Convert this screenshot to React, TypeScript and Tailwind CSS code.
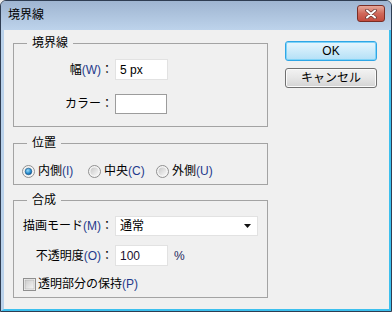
import React from 'react'

const font = "font-['Liberation_Sans','Noto_Sans_CJK_JP',sans-serif]"

function Key({ k }: { k: string }) {
  return <span className="text-[#1f3a8c]">({k})</span>
}

function Radio({ checked }: { checked?: boolean }) {
  return (
    <svg width="13" height="13" viewBox="0 0 13 13" className="shrink-0">
      <defs>
        <linearGradient id="rg-off" x1="0" y1="0" x2="1" y2="1">
          <stop offset="0" stopColor="#c8c8c8" />
          <stop offset="1" stopColor="#f8f8f8" />
        </linearGradient>
        <radialGradient id="rg-on" cx="0.4" cy="0.35" r="0.7">
          <stop offset="0" stopColor="#9fdcf8" />
          <stop offset="0.6" stopColor="#2a8fd0" />
          <stop offset="1" stopColor="#0d4f8c" />
        </radialGradient>
      </defs>
      <circle cx="6.5" cy="6.5" r="6" fill="#f4f4f4" stroke="#8f8f8f" />
      <circle cx="6.5" cy="6.5" r="4" fill="url(#rg-off)" />
      {checked && <circle cx="6.5" cy="6.5" r="3.3" fill="url(#rg-on)" stroke="#1a5a8e" strokeWidth="0.6" />}
    </svg>
  )
}

function Checkbox() {
  return (
    <svg width="13" height="13" viewBox="0 0 13 13" className="shrink-0">
      <defs>
        <linearGradient id="cb" x1="0" y1="0" x2="1" y2="1">
          <stop offset="0" stopColor="#cbcbcb" />
          <stop offset="1" stopColor="#f7f7f7" />
        </linearGradient>
      </defs>
      <rect x="0.5" y="0.5" width="12" height="12" fill="#f4f4f4" stroke="#8f8f8f" />
      <rect x="2" y="2" width="9" height="9" fill="url(#cb)" stroke="#a8a8a8" strokeWidth="0.5" />
    </svg>
  )
}

function Legend({ children }: { children: React.ReactNode }) {
  return <legend className="ml-[13px] px-[5px] text-[12px] leading-[14px]">{children}</legend>
}

function FieldLabel({ children }: { children: React.ReactNode }) {
  return <span className="w-[99px] text-right text-[12px] leading-[14px] whitespace-nowrap">{children}</span>
}

export default function App() {
  return (
    <div className={`w-[392px] h-[312px] bg-[#eaeaea] text-black ${font}`}>
      <div className="w-[392px] h-[312px] flex flex-col rounded-t-[6px] border border-[#2f3d52] overflow-hidden bg-[#b9d1ea]">
        {/* title bar */}
        <div className="h-[29px] shrink-0 flex items-center justify-between pl-[7px] pr-[6px] bg-gradient-to-b from-[#9fb5d1] to-[#bdd3eb]">
          <span className="text-[12px] leading-[14px] -mt-[2px]">境界線</span>
          <div className="w-[28px] h-[17px] -mt-[4px] rounded-[3px] border border-[#7a2d25] bg-gradient-to-b from-[#e6a89a] via-[#d0685a] to-[#c24b3e] flex items-center justify-center">
            <svg width="14" height="10" viewBox="0 0 14 10">
              <path d="M3 1.5 L11 8.5 M11 1.5 L3 8.5" stroke="#6b3a36" strokeWidth="3.6" strokeLinecap="round" />
              <path d="M3 1.5 L11 8.5 M11 1.5 L3 8.5" stroke="#ffffff" strokeWidth="2" strokeLinecap="round" />
            </svg>
          </div>
        </div>

        {/* client */}
        <div className="flex-1 flex border-l-[3px] border-l-[#b9d1ea] border-r-2 border-r-[#3cc0ee] border-b-2 border-b-[#3cc0ee]">
          <div className="flex-1 flex bg-[#f0f0f0] pl-[9px] pt-[6px]">
            <div className="w-[255px] flex flex-col">
              {/* 境界線 */}
              <fieldset className="h-[91px] border border-[#a3a3a3]">
                <Legend>境界線</Legend>
                <div className="flex flex-col pt-[9px] gap-[14px]">
                  <div className="flex items-center gap-[2px]">
                    <FieldLabel>
                      幅<Key k="W" />：
                    </FieldLabel>
                    <div className="w-[53px] h-[21px] bg-white border border-[#e2e2e2] flex items-center pl-[4px] text-[12px]">
                      5 px
                    </div>
                  </div>
                  <div className="flex items-center gap-[2px]">
                    <FieldLabel>カラー：</FieldLabel>
                    <div className="w-[52px] h-[20px] bg-white border border-[#9c9c9c]" />
                  </div>
                </div>
              </fieldset>

              {/* 位置 */}
              <fieldset className="mt-[9px] h-[49px] border border-[#a3a3a3]">
                <Legend>位置</Legend>
                <div className="flex items-center pl-[8px] pt-[14px] text-[12px] leading-[14px]">
                  <div className="w-[66px] flex items-center gap-[3px]">
                    <Radio checked />
                    <span>
                      内側<Key k="I" />
                    </span>
                  </div>
                  <div className="w-[68px] flex items-center gap-[3px]">
                    <Radio />
                    <span>
                      中央<Key k="C" />
                    </span>
                  </div>
                  <div className="flex items-center gap-[3px]">
                    <Radio />
                    <span>
                      外側<Key k="U" />
                    </span>
                  </div>
                </div>
              </fieldset>

              {/* 合成 */}
              <fieldset className="mt-[8px] h-[105px] border border-[#a3a3a3]">
                <Legend>合成</Legend>
                <div className="flex flex-col pt-[9px]">
                  <div className="flex items-center gap-[2px]">
                    <FieldLabel>
                      描画モード<Key k="M" />：
                    </FieldLabel>
                    <div className="w-[143px] h-[20px] bg-white border border-[#e2e2e2] flex items-center justify-between pl-[4px] pr-[6px] text-[12px]">
                      <span>通常</span>
                      <svg width="7" height="4" viewBox="0 0 7 4">
                        <path d="M0 0 H7 L3.5 4 Z" fill="#111" />
                      </svg>
                    </div>
                  </div>
                  <div className="flex items-center gap-[2px] mt-[9px]">
                    <FieldLabel>
                      不透明度<Key k="O" />：
                    </FieldLabel>
                    <div className="w-[53px] h-[21px] bg-white border border-[#e2e2e2] flex items-center pl-[4px] text-[12px] text-[#1a1030]">
                      100
                    </div>
                    <span className="ml-[4px] text-[12px] text-[#1f2a60]">%</span>
                  </div>
                  <div className="flex items-center gap-[2px] pl-[9px] mt-[11px] text-[12px] leading-[14px]">
                    <Checkbox />
                    <span>
                      透明部分の保持<Key k="P" />
                    </span>
                  </div>
                </div>
              </fieldset>
            </div>

            {/* buttons */}
            <div className="ml-[17px] pt-[5px] flex flex-col gap-[7px]">
              <button className="w-[92px] h-[20px] rounded-[3px] border border-[#2fa6e6] shadow-[inset_0_0_0_1px_#7fd3f7] bg-gradient-to-b from-[#e8f6fd] via-[#cdebfa] to-[#b3e0f7] text-[12px] leading-[14px]">
                OK
              </button>
              <button className="w-[92px] h-[20px] rounded-[3px] border border-[#707070] shadow-[inset_0_0_0_1px_#fbfbfb] bg-gradient-to-b from-[#f3f3f3] via-[#e6e6e6] to-[#d3d3d3] text-[12px] leading-[14px]">
                キャンセル
              </button>
            </div>
          </div>
        </div>
      </div>
    </div>
  )
}
